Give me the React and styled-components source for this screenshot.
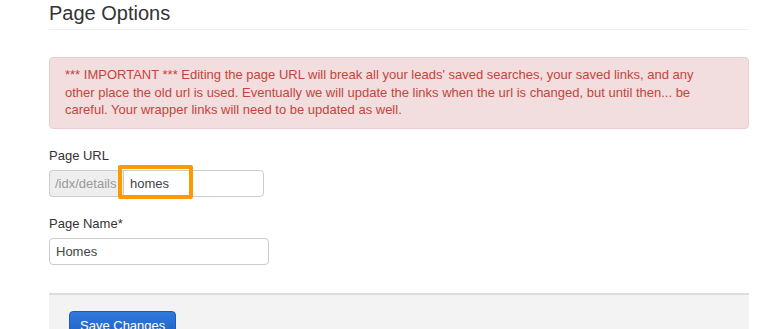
import React from "react";
import styled, { createGlobalStyle } from "styled-components";

const GlobalStyle = createGlobalStyle`
  html, body {
    margin: 0;
    padding: 0;
    background: #fff;
    font-family: "Liberation Sans", Arial, sans-serif;
    color: #333;
  }
`;

const Page = styled.div`
  width: 700px;
  margin-left: 49px;
  overflow: hidden;
  height: 329px;
`;

const Heading = styled.h3`
  margin: 0;
  padding-top: 2px;
  font-size: 20px;
  font-weight: normal;
  line-height: 22px;
  color: #333;
  padding-bottom: 5px;
  border-bottom: 1px solid #eee;
`;

const Alert = styled.div`
  margin-top: 27px;
  padding: 8px 35px 9px 15px;
  background: #f2dede;
  border: 1px solid #ebccd1;
  border-radius: 4px;
  color: #c2453d;
  font-size: 13px;
  line-height: 17.5px;
`;

const Field = styled.div`
  margin-top: ${(p) => p.$top}px;
`;

const Label = styled.label`
  display: block;
  font-size: 13px;
  line-height: 16px;
  margin-bottom: 6px;
  color: #333;
`;

const InputGroup = styled.div`
  position: relative;
  display: flex;
  width: 215px;
  height: 27px;
`;

const Addon = styled.span`
  display: flex;
  align-items: center;
  width: 74px;
  box-sizing: border-box;
  padding: 0 0 0 5px;
  background: #eee;
  border: 1px solid #ccc;
  border-right: none;
  border-radius: 4px 0 0 4px;
  color: #999;
  font-size: 13px;
`;

const Input = styled.input`
  box-sizing: border-box;
  width: ${(p) => p.$w}px;
  height: 27px;
  padding: 0 6px;
  border: 1px solid #ccc;
  border-radius: ${(p) => (p.$grouped ? "0 4px 4px 0" : "4px")};
  font-family: "Liberation Sans", Arial, sans-serif;
  font-size: 13px;
  color: #444;
  outline: none;
`;

const Highlight = styled.div`
  position: absolute;
  left: 69px;
  top: -5px;
  width: 67px;
  height: 26px;
  border: 4px solid #ff9900;
  border-radius: 2px;
  pointer-events: none;
`;

const Footer = styled.div`
  margin-top: 28px;
  background: #f3f3f3;
  border-top: 2px solid #ddd;
  padding: 16px 20px;
  height: 60px;
`;

const Button = styled.button`
  font-family: "Liberation Sans", Arial, sans-serif;
  font-size: 13px;
  color: #fff;
  padding: 6px 10px;
  border: 1px solid #1f5bb8;
  border-radius: 4px;
  background: linear-gradient(#3079dc, #1d5ec5);
`;

export default function App() {
  return (
    <>
      <GlobalStyle />
      <Page>
        <Heading>Page Options</Heading>
        <Alert>
          *** IMPORTANT *** Editing the page URL will break all your leads' saved
          searches, your saved links, and any other place the old url is used.
          Eventually we will update the links when the url is changed, but until
          then... be careful. Your wrapper links will need to be updated as well.
        </Alert>
        <Field $top={19}>
          <Label>Page URL</Label>
          <InputGroup>
            <Addon>/idx/details</Addon>
            <Input $grouped $w={141} defaultValue="homes" />
            <Highlight />
          </InputGroup>
        </Field>
        <Field $top={19}>
          <Label>Page Name*</Label>
          <Input $w={220} defaultValue="Homes" />
        </Field>
        <Footer>
          <Button>Save Changes</Button>
        </Footer>
      </Page>
    </>
  );
}
